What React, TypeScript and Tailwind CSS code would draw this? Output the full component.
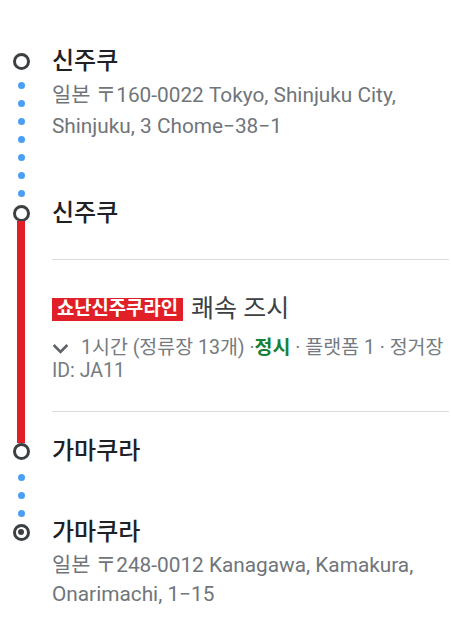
// Transit route steps
const FONT = "font-['Roboto','Noto_Sans_CJK_KR',sans-serif]";

function Ring({ filled = false }: { filled?: boolean }) {
  return (
    <div className="w-[17px] h-[17px] rounded-full border-[3.5px] border-[#3c4043] bg-white flex items-center justify-center shrink-0">
      {filled && <div className="w-[6px] h-[6px] rounded-full bg-[#3c4043]" />}
    </div>
  );
}

function Dots({ count }: { count: number }) {
  return (
    <div className="flex flex-col items-center gap-[11px]">
      {Array.from({ length: count }).map((_, i) => (
        <div key={i} className="w-[7px] h-[7px] rounded-full bg-[#4a9ff5]" />
      ))}
    </div>
  );
}

function Stop({ name, filled }: { name: string; filled?: boolean }) {
  return (
    <div className="flex items-center h-7">
      <div className="w-[42px] shrink-0 flex justify-center">
        <Ring filled={filled} />
      </div>
      <div className="pl-[10px] text-[24px] font-medium text-[#202124] whitespace-nowrap">{name}</div>
    </div>
  );
}

function ExpandMore() {
  return (
    <svg viewBox="0 0 24 24" className="inline-block w-[31px] h-[31px] -my-[8px] -ml-[7px] mr-[5px] align-middle fill-[#5f6368]">
      <path d="M16.59 8.59 12 13.17 7.41 8.59 6 10l6 6 6-6z" />
    </svg>
  );
}

export default function App() {
  return (
    <div className={`${FONT} bg-white w-[451px] h-[642px] pt-[47px] overflow-hidden`}>
      <Stop name="신주쿠" />
      <div className="flex h-[124px]">
        <div className="w-[42px] shrink-0 flex justify-center pt-[7px]">
          <Dots count={7} />
        </div>
        <div className="pl-[10px] pr-4 pt-[5px] text-[20.8px] leading-[31px] text-[#70757a]">
          일본 〒160-0022 Tokyo, Shinjuku City, Shinjuku, 3 Chome−38−1
        </div>
      </div>
      <Stop name="신주쿠" />
      <div className="flex">
        <div className="w-[42px] shrink-0 flex justify-center">
          <div className="w-2 bg-[#e01f28] -mt-[6px] -mb-[6px]" />
        </div>
        <div className="flex-1 pl-[10px] pr-[2px]">
          <div className="h-[33px] border-b border-[#dadce0]" />
          <div className="flex items-center gap-2 mt-[34px] h-[30px]">
            <span className="bg-[#e01f28] text-white font-bold text-[18.8px] leading-[23px] px-[5px] whitespace-nowrap">쇼난신주쿠라인</span>
            <span className="text-[25px] leading-[30px] text-[#3c4043] whitespace-nowrap">쾌속 즈시</span>
          </div>
          <div className="mt-[12px] pr-[2px] text-[19.5px] leading-[23px] text-[#757b80]">
            <ExpandMore />
            1시간 (정류장 13개) ·<span className="font-bold text-[#188038]">정시</span> · 플랫폼 1 · 정거장 ID: JA11
          </div>
          <div className="h-[30px] border-b border-[#dadce0]" />
          <div className="h-[25px]" />
        </div>
      </div>
      <Stop name="가마쿠라" />
      <div className="flex h-[53px]">
        <div className="w-[42px] shrink-0 flex justify-center pt-[9px]">
          <Dots count={3} />
        </div>
      </div>
      <Stop name="가마쿠라" filled />
      <div className="pl-[52px] pr-4 pt-[5px] text-[20.8px] leading-[29px] text-[#70757a]">
        일본 〒248-0012 Kanagawa, Kamakura, Onarimachi, 1−15
      </div>
    </div>
  );
}
